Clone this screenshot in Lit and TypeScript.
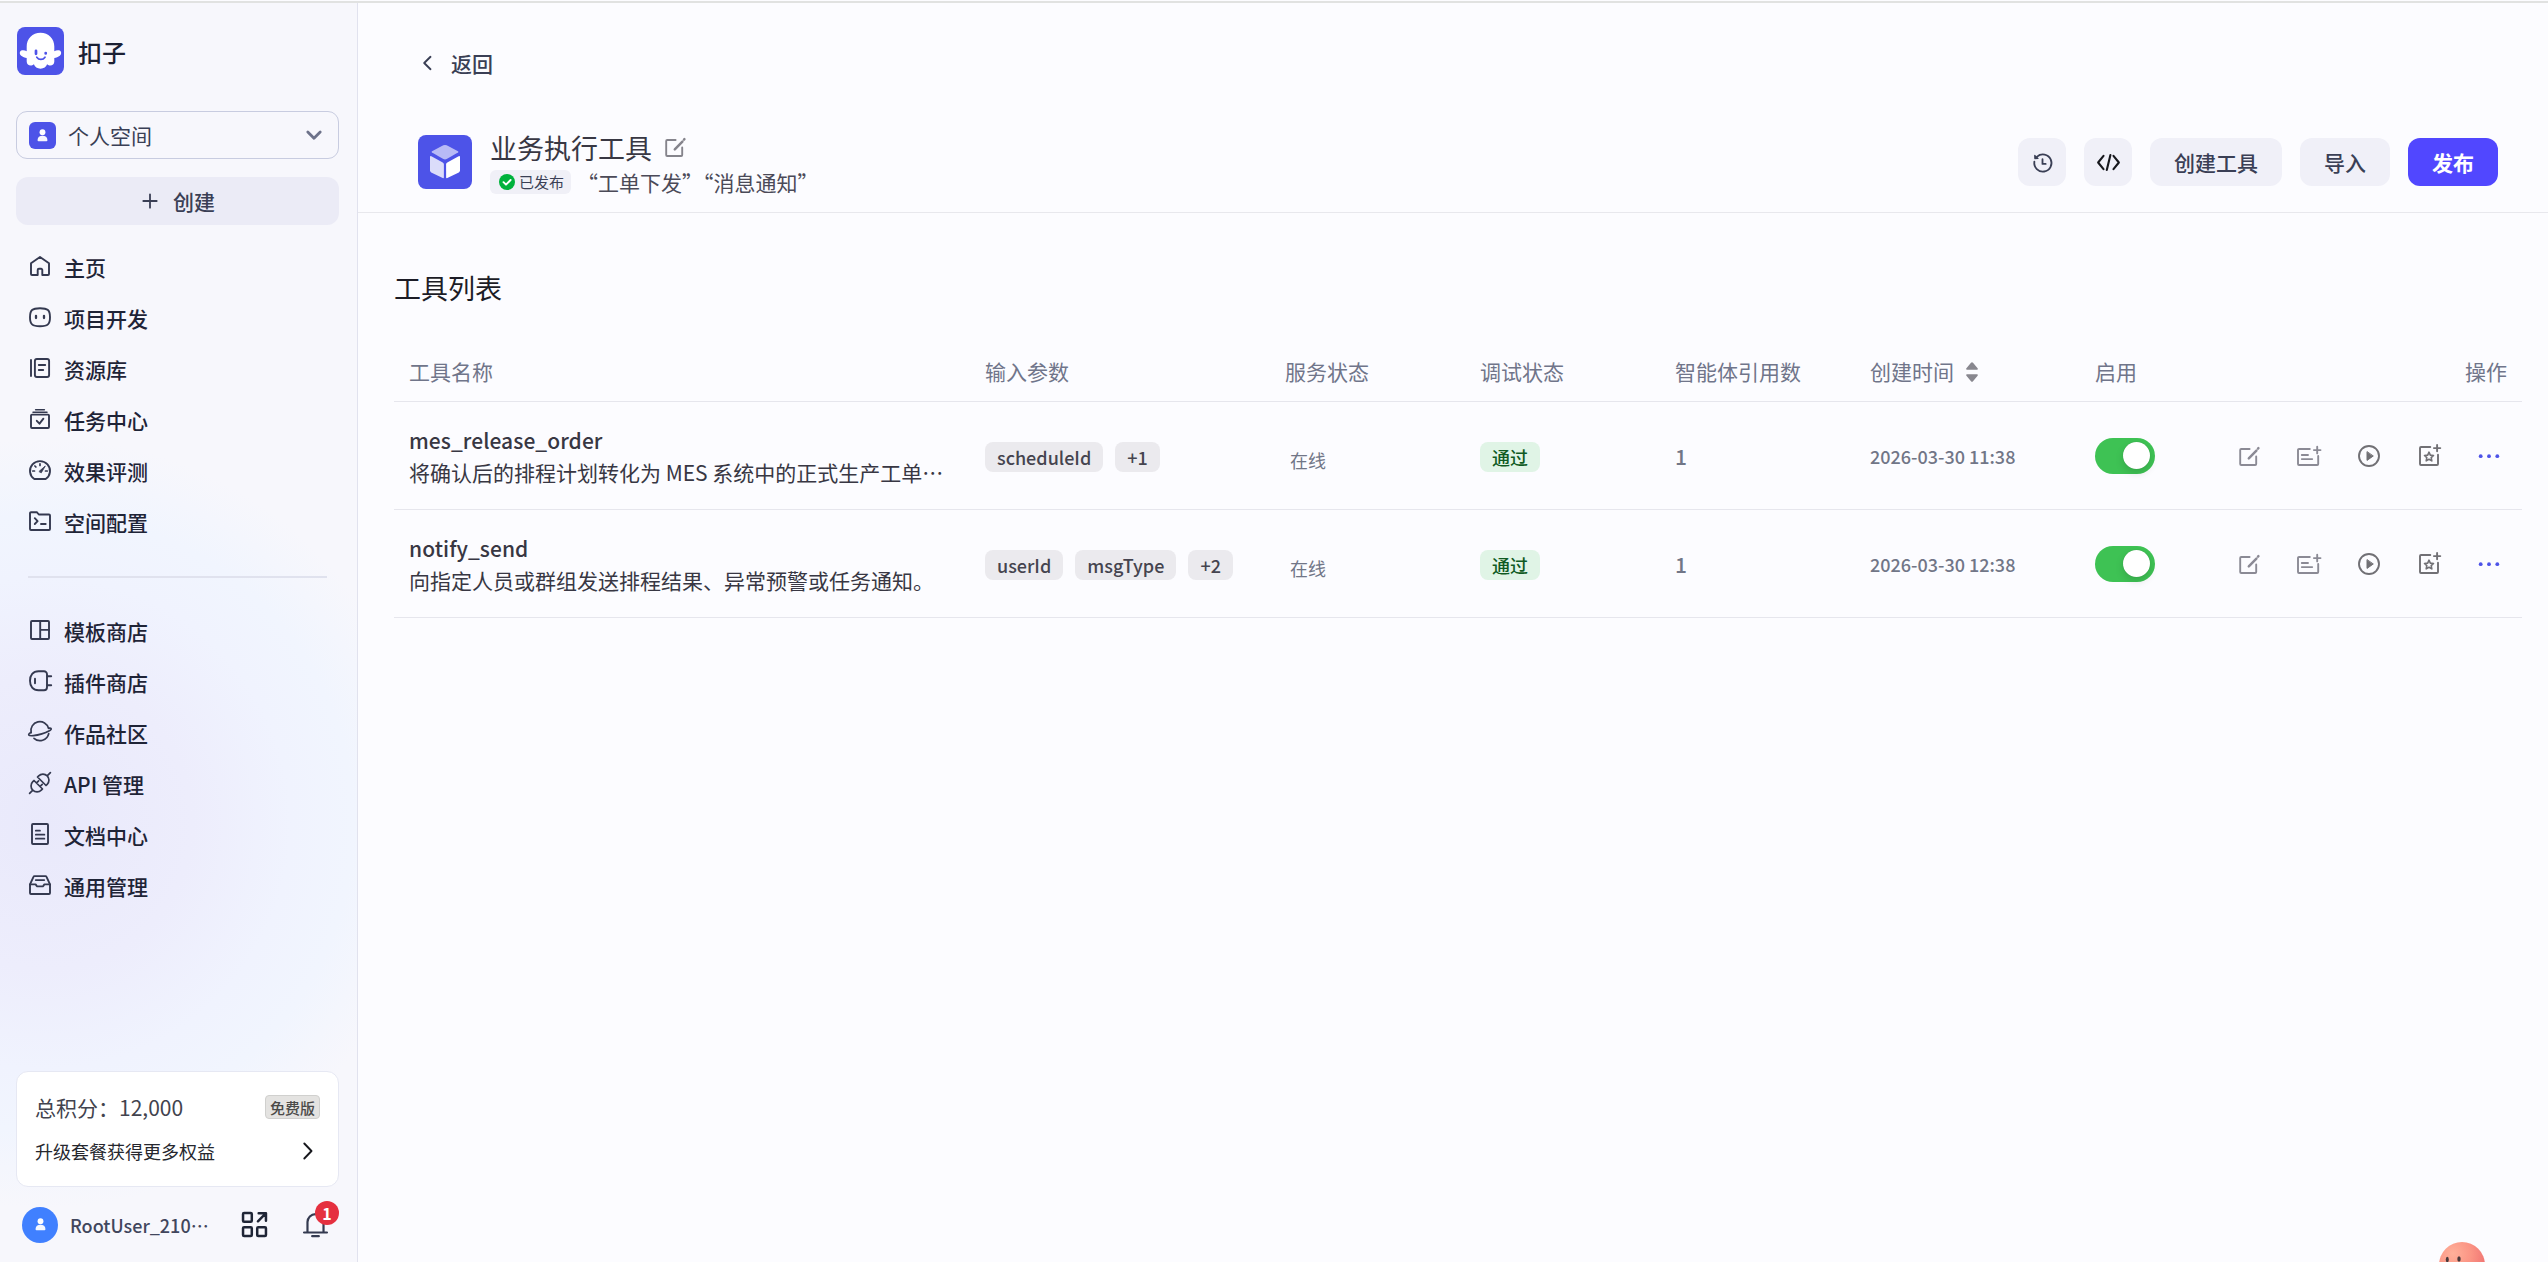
import { LitElement, html, css, svg } from "lit";
import { customElement, property } from "lit/decorators.js";

const icons: Record<string, unknown> = {
  home: svg`<path d="M9.7 21H4a1 1 0 0 1-1-1V9.3L12 2.9l9 6.4V20a1 1 0 0 1-1 1h-5.700v-5a1.200 1.200 0 0 0-1.200-1.200h-2.200A1.200 1.200 0 0 0 9.700 16z"/>`,
  bot: svg`<path d="M12 3.200c7.800 0 10 1.800 10 9s-2.200 9-10 9-10-1.800-10-9 2.200-9 10-9z"/><path stroke-width="2.300" d="M8 10.800v2.200M16 10.800v2.200"/>`,
  library: svg`<rect x="6.900" y="3" width="14.200" height="18" rx="2"/><path d="M3 4v16M10.800 9h6.400M10.800 14h4.400"/>`,
  task: svg`<rect x="3" y="7.600" width="18" height="13.400" rx="1"/><path d="m8.800 13.800 2.700 2.900 3.900-5"/><path d="M5 5.200h14" stroke-width="1.500"/><path d="M7.600 2.700h8.800" stroke-width="1.500"/>`,
  gauge: svg`<path d="M6.300 21a10 9.800 0 1 1 11.400 0z"/><path d="M12 5.800v1.600M4.800 13h1.700M17.500 13h1.700M6.900 8l1 1" stroke-width="1.700"/><path d="M11.200 13.300 17.300 8 13.400 14.600z" fill="currentColor" stroke-width=".8"/>`,
  folder: svg`<path d="M2 4.200a1 1 0 0 1 1-1h5.800l2 2.300H21a1 1 0 0 1 1 1V20a1 1 0 0 1-1 1H3a1 1 0 0 1-1-1z"/><path d="m6.800 9.200 2.800 2.900-2.800 2.900M13 15h4.700"/>`,
  template: svg`<rect x="3" y="3" width="18" height="18" rx="1"/><path d="M12.200 3v18M12.200 11.900H21"/>`,
  plugin: svg`<path d="M10.500 2.300H16a3 3 0 0 1 3 3v13a3 3 0 0 1-3 3h-5.500C5 21.300 2 17.500 2 11.800s3-9.500 8.500-9.500z"/><path d="M7 9.800v4.400M19.500 7.300h3.700M19.500 16.300h3.700"/>`,
  planet: svg`<path d="M3.100 12.600A9 9 0 0 1 20.600 8.400M6 18.400a9 9 0 0 0 14.700-4.700" stroke-width="1.700"/><path d="M2.900 12.400C1.300 13.300.4 14.300.8 15c.8 1.300 7 .8 13-1.100s9.800-4.100 9.400-5.200c-.2-.5-1.100-.7-2.600-.5" stroke-width="1.700"/>`,
  api: svg`<path d="m6 9.500 8.500 8.500-1.200 1.200a6 6 0 0 1-8.500-8.500zM18 14.500 9.500 6l1.200-1.200a6 6 0 0 1 8.500 8.500zM4.600 19.400l-3 3M19.400 4.600l3-3M8.600 11.800l2-2M12.200 15.400l2-2" stroke-width="1.700"/>`,
  doc: svg`<rect x="4" y="2" width="16" height="20" rx="1"/><path d="M7.800 8.700h4.200M7.800 12.700h8.600M7.800 16.700h8.600" stroke-width="1.700"/>`,
  inbox: svg`<path d="M2 11.300 5.600 3.700a1 1 0 0 1 .9-.6h11a1 1 0 0 1 .9.6L22 11.300V20a1 1 0 0 1-1 1H3a1 1 0 0 1-1-1z"/><path d="M2 11.400h5.600l1.100 1.500q.4.500 1 .5h4.600q.6 0 1-.5l1.100-1.500H22M7.800 7.100h8.400"/>`,
  edit: svg`<path d="M12.600 5H4.200a1 1 0 0 0-1 1v14a1 1 0 0 0 1 1h14a1 1 0 0 0 1-1v-7.500"/><path d="m11.800 14.300 7.600-7.600" stroke-width="2.500"/><path d="m21 4.600.4-.4" stroke-width="2.500"/>`,
  listPlus: svg`<path d="M12.800 5H2a1 1 0 0 0-1 1v14a1 1 0 0 0 1 1h18.200a1 1 0 0 0 1-1v-8"/><path d="M4.800 11h6.200M4.800 15.100h10.400M20.200 2.800v6.600M16.900 6.100h6.600"/>`,
  play: svg`<circle cx="12" cy="12" r="10"/><path d="M10 8v8.400l6-4.200z" fill="currentColor" stroke-width="1"/>`,
  starPlus: svg`<path d="M13.300 3H4a1 1 0 0 0-1 1v16a1 1 0 0 0 1 1h16a1 1 0 0 0 1-1v-9.300"/><path d="M20.100.9v6.400M16.900 4.100h6.400"/><path d="m12 8.200 1.300 2.900 3.200.4-2.300 2.200.6 3.200-2.800-1.600-2.800 1.600.6-3.200-2.300-2.200 3.200-.4z" stroke-width="1.600"/>`,
  dots: svg`<g fill="currentColor" stroke="none"><circle cx="3.700" cy="12.200" r="1.900"/><circle cx="12" cy="12.200" r="1.900"/><circle cx="20.300" cy="12.200" r="1.900"/></g>`,
  history: svg`<path d="M3.500 11.200a9 9 0 1 0 2.900-5.400" /><path d="M3.900 4.600 4 7.900l3.300-.1z" fill="currentColor" stroke-width="1.200"/><path d="M12 8.500v5h3.300"/>`,
  code: svg`<path d="M6.800 5 1.200 12l5.600 7M17.200 5l5.600 7-5.600 7M14 4.200 10.200 19.800" stroke-width="2.200"/>`,
  plus: svg`<path d="M12 5.300v13.400M5.300 12h13.400" stroke-width="1.800"/>`,
  chevDown: svg`<path d="m5.800 9 6.200 6.300L18.200 9" stroke-width="2.800"/>`,
  chevRight: svg`<path d="m8.300 4.500 7.200 7.500-7.200 7.500"/>`,
  chevLeft: svg`<path d="m15.500 5.800-6.300 6.200 6.300 6.200"/>`,
  apps: svg`<g stroke-width="2.400"><rect x="1" y="1" width="8.400" height="8.400" rx="1"/><rect x="1" y="14.600" width="8.400" height="8.400" rx="1"/><rect x="14.600" y="14.600" width="8.400" height="8.400" rx="1"/><path d="m15.300 8.900 7-7M16 1.300h7v7"/></g>`,
  bell: svg`<path d="M4.300 19.500V9.700a7.700 7.700 0 0 1 15.400 0v9.800M1 19.700h22M8.800 23.200h6.400" stroke-width="2.100"/>`,
};

@customElement("ui-icon")
class UiIcon extends LitElement {
  @property() name = "";
  static styles = css`
    :host { display: inline-flex; width: 24px; height: 24px; flex: none; }
    svg { width: 100%; height: 100%; overflow: visible; }
  `;
  render() {
    return html`<svg viewBox="0 0 24 24" fill="none" stroke="currentColor" stroke-width="1.9" stroke-linecap="round" stroke-linejoin="round">${icons[this.name]}</svg>`;
  }
}

const person = html`<svg class="person" viewBox="0 0 12 14"><circle cx="6" cy="3.500" r="3.200" fill="#fff"/><path d="M.6 12.200C.6 9 2.800 7.400 6 7.400s5.400 1.600 5.400 4.800c0 .7-.4 1.100-1 1.100H1.600c-.6 0-1-.4-1-1.100z" fill="#fff" opacity=".95"/></svg>`;

const mainNav = [
  ["home", "主页"], ["bot", "项目开发"], ["library", "资源库"],
  ["task", "任务中心"], ["gauge", "效果评测"], ["folder", "空间配置"],
];
const moreNav = [
  ["template", "模板商店"], ["plugin", "插件商店"], ["planet", "作品社区"],
  ["api", "API 管理"], ["doc", "文档中心"], ["inbox", "通用管理"],
];

@customElement("side-bar")
class SideBar extends LitElement {
  static styles = css`
    :host {
      display: flex; flex-direction: column; width: 358px; height: 100%; box-sizing: border-box;
      padding: 24px 18px 0 16px; border-right: 1px solid #e1e2ee;
      background: radial-gradient(circle 385px at 45px 820px, #e9e9fb 0%, #ededfc 38%, #f0f3fe 64%, #f1f5fe 80%, #f7f7fc 100%) #f7f7fc;
    }
    .brand { display: flex; align-items: center; gap: 14px; height: 48px; padding-left: 1px; font-size: 24px; font-weight: 500; color: #1b2033; }
    .brand svg { width: 47px; height: 48px; }
    .brand span { padding-top: 2px; }
    .space {
      display: flex; align-items: center; margin-top: 36px; height: 48px; box-sizing: border-box;
      border: 1px solid #c8cce0; border-radius: 11px; padding: 0 12px; color: #3a3f55; font-size: 21px;
    }
    .space-icon { width: 27px; height: 27px; border-radius: 6px; background: #4d53e8; margin-right: 12px; }
    .space-icon, .face { display: flex; align-items: center; justify-content: center; flex: none; }
    .person { width: 11px; height: 13px; }
    .space ui-icon { margin-left: auto; color: #6d728a; }
    .create {
      display: flex; align-items: center; justify-content: center; gap: 11px; margin-top: 18px; height: 48px;
      padding-right: 2px; border-radius: 12px; background: #ebebf6; color: #3a3f55; font-size: 21px; font-weight: 500;
    }
    .nav { display: flex; flex-direction: column; padding-left: 12px; }
    .main { padding-top: 16px; }
    .more { padding-top: 27px; }
    .item { display: flex; align-items: center; gap: 12px; height: 51px; font-size: 21px; font-weight: 500; color: #1f2437; }
    .item ui-icon { color: #343950; margin-bottom: 1px; }
    .item span { padding-top: 2px; }
    .divider { height: 2px; margin: 29px 12px 0; background: #e0e2ee; flex: none; }
    .card {
      margin-top: auto; height: 116px; box-sizing: border-box; border: 1px solid #e6e8f3; border-radius: 12px;
      background: #fff; padding: 20px 18px 0; flex: none;
    }
    .line { display: flex; align-items: center; justify-content: space-between; height: 30px; font-size: 21px; color: #42434e; }
    .line + .line { margin-top: 14px; font-size: 18px; color: #26272e; }
    .line + .line ui-icon { color: #16171c; }
    .free {
      width: 55px; height: 24px; box-sizing: border-box; border: 1px solid #d0d0ce; border-radius: 4px; background: #e4e3e1;
      font-size: 15px; line-height: 23px; text-align: center; color: #4b4a48; font-weight: 500;
    }
    .user { display: flex; align-items: center; height: 75px; flex: none; color: #41465c; font-size: 18px; font-weight: 500; }
    .face { width: 36px; height: 36px; margin: 0 12px 0 6px; border-radius: 50%; background: #4080ff; }
    .user-name { width: 141px; white-space: nowrap; padding-top: 1px; }
    .apps { margin-left: 31px; width: 25px; height: 25px; color: #1f2536; }
    .alerts { position: relative; display: flex; margin-left: 36px; color: #343a50; }
    .alerts ui-icon { width: 25px; height: 25px; }
    .count {
      position: absolute; left: 12px; top: -11px; width: 24px; height: 24px; border-radius: 50%; background: #e5303f;
      color: #fff; font-size: 16px; line-height: 24px; text-align: center; font-weight: 700;
    }
  `;
  private item([icon, label]: string[]) {
    return html`<div class="item"><ui-icon name=${icon}></ui-icon><span>${label}</span></div>`;
  }
  render() {
    return html`
      <div class="brand">
        <svg viewBox="0 0 47 48">
          <rect width="47" height="48" rx="8" fill="#4d53e8"/>
          <path fill="#fff" d="M23.500 5.800c8 0 13.800 5.800 13.800 13.800v4.600c1.400-.8 3-1.200 4.600-.9 2.600.5 3.100 3.800.9 5.400-1.600 1.200-3.600 2-5.500 2.200v3.600c0 3-2.800 4.600-5.600 3.700-.6-.2-1.200-.5-1.600-.9-.8 2.600-3.400 4.400-6.600 4.400s-5.800-1.800-6.600-4.400c-.4.4-1 .7-1.600.9-2.800.9-5.600-.7-5.600-3.700v-3.600c-1.900-.2-3.900-1-5.500-2.200-2.200-1.600-1.700-4.900.9-5.400 1.600-.3 3.200.1 4.600.9v-4.600c0-8 5.800-13.800 13.800-13.800z"/>
          <path d="M19 23.800v3M28.700 26v.5" stroke="#4d53e8" stroke-width="2.700" stroke-linecap="round"/>
          <path d="M19.800 30.200c2 3 6.200 3 8.200 0" stroke="#4d53e8" stroke-width="1.700" fill="none" stroke-linecap="round"/>
        </svg>
        <span>扣子</span>
      </div>
      <div class="space"><div class="space-icon">${person}</div><span>个人空间</span><ui-icon name="chevDown"></ui-icon></div>
      <div class="create"><ui-icon name="plus"></ui-icon><span>创建</span></div>
      <div class="nav main">${mainNav.map((n) => this.item(n))}</div>
      <div class="divider"></div>
      <div class="nav more">${moreNav.map((n) => this.item(n))}</div>
      <div class="card">
        <div class="line"><span>总积分：12,000</span><span class="free">免费版</span></div>
        <div class="line"><span>升级套餐获得更多权益</span><ui-icon name="chevRight"></ui-icon></div>
      </div>
      <div class="user">
        <div class="face">${person}</div>
        <span class="user-name" lang="zh-CN">RootUser_210⋯</span>
        <ui-icon class="apps" name="apps"></ui-icon>
        <div class="alerts"><ui-icon name="bell"></ui-icon><span class="count">1</span></div>
      </div>`;
  }
}

interface Tool { name: string; desc: string; params: string[]; refs: number; created: string; }
const tools: Tool[] = [
  { name: "mes_release_order", desc: "将确认后的排程计划转化为 MES 系统中的正式生产工单⋯", params: ["scheduleId", "+1"], refs: 1, created: "2026-03-30 11:38" },
  { name: "notify_send", desc: "向指定人员或群组发送排程结果、异常预警或任务通知。", params: ["userId", "msgType", "+2"], refs: 1, created: "2026-03-30 12:38" },
];

@customElement("tool-table")
class ToolTable extends LitElement {
  static styles = css`
    :host { display: block; }
    .row {
      display: grid; grid-template-columns: 575px 300px 195px 195px 195px 225px 1fr; align-items: center;
      height: 108px; box-sizing: border-box; padding-top: 1px; border-bottom: 1px solid #e6e6ed; color: #717687; font-size: 21px;
    }
    .row > * { padding-left: 16px; min-width: 0; }
    .row > :first-child { padding-left: 15px; }
    .head { height: 60px; padding-top: 0; color: #70758a; }
    .sortable { display: flex; align-items: center; gap: 12px; }
    .sortable svg { width: 12px; height: 20px; }
    .controls { display: flex; align-items: center; justify-content: space-between; }
    .ops-title { padding-right: 15px; }
    .name { color: #383743; line-height: 33px; white-space: nowrap; }
    .name b { display: block; font-weight: 500; line-height: 32px; letter-spacing: .06px; }
    .tags { display: flex; gap: 12px; padding-top: 2px; }
    .tag { height: 30px; line-height: 30px; padding: 0 12px; border-radius: 8px; background: #ebeaee; color: #45444f; font-size: 18px; font-weight: 500; }
    .pass { background: #e0f4e6; color: #0f5a23; }
    .state { font-size: 18px; padding: 8px 0 0 21px; }
    .refs { font-weight: 500; }
    .date { font-size: 18px; font-weight: 500; }
    .switch { display: flex; width: 60px; height: 36px; box-sizing: border-box; padding: 4px 5px 0 28px; border-radius: 18px; background: #3ec254; }
    .knob { width: 27px; height: 27px; border-radius: 50%; background: #fff; box-shadow: 0 4px 8px rgba(0,0,0,.13), 0 0 1px rgba(0,0,0,.2); }
    .ops { display: flex; justify-content: flex-end; gap: 36px; padding-right: 21px; color: #8b8a95; }
    .dark { color: #717075; }
    .accent { color: #4d53e8; }
  `;
  private row(t: Tool) {
    return html`<div class="row">
      <div class="name"><b>${t.name}</b>${t.desc}</div>
      <div class="tags">${t.params.map((p) => html`<span class="tag">${p}</span>`)}</div>
      <div class="state">在线</div>
      <div class="tags"><span class="tag pass">通过</span></div>
      <div class="refs">${t.refs}</div>
      <div class="date">${t.created}</div>
      <div class="controls">
        <div class="switch"><div class="knob"></div></div>
        <div class="ops">
          <ui-icon name="edit"></ui-icon><ui-icon name="listPlus"></ui-icon>
          <ui-icon class="dark" name="play"></ui-icon><ui-icon class="dark" name="starPlus"></ui-icon>
          <ui-icon class="accent" name="dots"></ui-icon>
        </div>
      </div>
    </div>`;
  }
  render() {
    return html`
      <div class="row head">
        <div>工具名称</div><div>输入参数</div><div>服务状态</div><div>调试状态</div><div>智能体引用数</div>
        <div class="sortable">创建时间<svg viewBox="0 0 12 20"><path d="M6 .3q.6 0 1 .5l4.600 5.500q.7 1.100-.6 1.400H1Q-.3 7.400.4 6.300L5 .8q.4-.5 1-.5zM6 19.700q-.6 0-1-.5L.4 13.700Q-.3 12.600 1 12.300h10q1.300.3.6 1.400L7 19.200q-.4.5-1 .5z" fill="#88878f"/></svg></div>
        <div class="controls"><span>启用</span><span class="ops-title">操作</span></div>
      </div>
      ${tools.map((t) => this.row(t))}`;
  }
}

@customElement("app-root")
class AppRoot extends LitElement {
  static styles = css`
    :host {
      display: flex; flex-direction: column; position: relative; height: 1262px; overflow: hidden; box-sizing: border-box; padding-top: 1px;
      background: #fcfcff; font-family: "Noto Sans CJK SC", "Noto Sans", sans-serif; line-height: 1.45;
    }
    .topline { height: 2px; background: #e1e2e1; flex: none; }
    .shell { display: flex; flex: 1; min-height: 0; }
    .page { flex: 1; min-width: 0; }
    .top { height: 210px; box-sizing: border-box; border-bottom: 1px solid #e8e8ed; padding: 42px 50px 0 60px; }
    .back { display: flex; align-items: center; gap: 12px; height: 36px; font-size: 21px; font-weight: 500; color: #3a3f55; margin-left: -3px; }
    .header { display: flex; align-items: center; height: 54px; margin-top: 54px; }
    .cube { width: 54px; height: 54px; margin-right: 18px; flex: none; }
    .info { display: flex; flex-direction: column; gap: 4px; }
    .title { display: flex; align-items: center; gap: 11px; height: 36px; font-size: 27px; color: #383743; }
    .title ui-icon { color: #85848c; margin-top: -2px; }
    .sub { display: flex; align-items: center; height: 24px; font-size: 21px; color: #4b4a58; }
    .quote { padding-top: 1px; }
    .status { display: flex; align-items: center; gap: 4px; width: 81px; height: 24px; box-sizing: border-box; padding-left: 9px; margin-right: 6px; border-radius: 6px; background: #f0f0f7; font-size: 15px; color: #3a3f55; white-space: nowrap; }
    .status svg { width: 16px; height: 16px; flex: none; }
    .buttons { display: flex; gap: 18px; margin-left: auto; }
    .btn { display: flex; align-items: center; justify-content: center; height: 48px; padding: 0 24px; border-radius: 12px; background: #f0f0f8; font-size: 21px; font-weight: 500; color: #3a3f55; }
    .square { width: 48px; padding: 0; }
    .square ui-icon { width: 23px; height: 23px; }
    .ink { color: #17181d; }
    .primary { background: #5147ff; color: #fff; font-weight: 700; }
    .body { padding: 55px 26px 0 36px; }
    .heading { height: 40px; line-height: 40px; font-size: 27px; color: #1c1c26; margin-bottom: 34px; }
    .helper { position: absolute; left: 2439px; top: 1242px; width: 46px; height: 46px; }
  `;
  render() {
    return html`
      <div class="topline"></div>
      <div class="shell">
        <side-bar></side-bar>
        <div class="page">
          <div class="top">
            <div class="back"><ui-icon name="chevLeft"></ui-icon><span>返回</span></div>
            <div class="header">
              <svg class="cube" viewBox="0 0 54 54">
                <rect width="54" height="54" rx="8" fill="#4d53e8"/>
                <path d="M25.300 10.300q1.700-.7 3.400 0L40 16.200q1 .7 0 1.400l-11.300 6.500q-1.700.8-3.400 0L14 17.600q-1-.7 0-1.400z" fill="#b8baf6"/>
                <path d="M12 22q0-1.500 1.400-.8l11.300 6.400q1.200.7 1.200 2v12.700q0 1.200-1.200.7l-11.500-5.500Q12 36.800 12 35.300z" fill="#dbdcfa"/>
                <path d="M42 22q0-1.500-1.400-.8l-11.300 6.400q-1.200.7-1.200 2v12.700q0 1.200 1.200.7l11.500-5.500Q42 36.800 42 35.300z" fill="#fff"/>
              </svg>
              <div class="info">
                <div class="title"><span>业务执行工具</span><ui-icon name="edit"></ui-icon></div>
                <div class="sub">
                  <span class="status"><svg viewBox="0 0 16 16"><circle cx="8" cy="8" r="8" fill="#00b23c"/><path d="m4.500 8.200 2.500 2.500L11.600 6" fill="none" stroke="#fff" stroke-width="1.900" stroke-linecap="round" stroke-linejoin="round"/></svg>已发布</span>
                  <span class="quote">“工单下发”“消息通知”</span>
                </div>
              </div>
              <div class="buttons">
                <div class="btn square"><ui-icon name="history"></ui-icon></div>
                <div class="btn square ink"><ui-icon name="code"></ui-icon></div>
                <div class="btn">创建工具</div>
                <div class="btn">导入</div>
                <div class="btn primary">发布</div>
              </div>
            </div>
          </div>
          <div class="body">
            <div class="heading">工具列表</div>
            <tool-table></tool-table>
          </div>
        </div>
      </div>
      <svg class="helper" viewBox="0 0 46 46">
        <defs><radialGradient id="skin" cx=".3" cy=".25" r=".8"><stop offset="0" stop-color="#ffb09a"/><stop offset=".5" stop-color="#fb9484"/><stop offset="1" stop-color="#ee6f70"/></radialGradient></defs>
        <circle cx="23" cy="23" r="23" fill="url(#skin)"/>
        <ellipse cx="8.300" cy="17.500" rx="1.500" ry="2.800" fill="#4a3a3c"/><ellipse cx="20" cy="17" rx="1.700" ry="2.800" fill="#4a3a3c"/>
      </svg>`;
  }
}
